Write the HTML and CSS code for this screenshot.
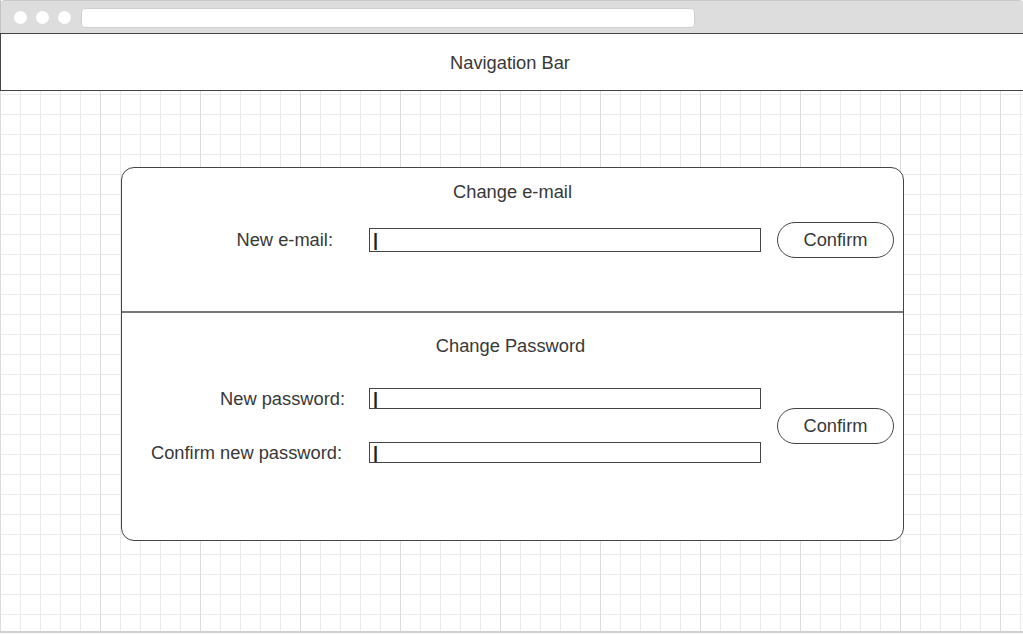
FILE: index.html
```html
<!DOCTYPE html>
<html>
<head>
<meta charset="utf-8">
<link rel="stylesheet" href="styles.css">
</head>
<body>
<div class="window">
  <div class="chrome">
    <div class="dots"><span class="dot"></span><span class="dot"></span><span class="dot"></span></div>
    <div class="url"></div>
  </div>
  <div class="navbar">Navigation Bar</div>
  <div class="canvas">
    <div class="card">
      <div class="section section-email">
        <div class="title">Change e-mail</div>
        <div class="row">
          <div class="label label-email">New e-mail:</div>
          <div class="field field-tall"><span class="caret">|</span></div>
          <button class="btn">Confirm</button>
        </div>
      </div>
      <div class="section section-pass">
        <div class="title title-pass">Change Password</div>
        <div class="pass-form">
          <div class="pass-rows">
            <div class="prow">
              <div class="label label-new">New password:</div>
              <div class="field"><span class="caret">|</span></div>
            </div>
            <div class="prow">
              <div class="label label-confirm">Confirm new password:</div>
              <div class="field"><span class="caret">|</span></div>
            </div>
          </div>
          <button class="btn">Confirm</button>
        </div>
      </div>
    </div>
  </div>
</div>
</body>
</html>
```

FILE: styles.css
```css
* { box-sizing: border-box; }
html, body { margin: 0; padding: 0; background: #ffffff; }
body {
  font-family: "Liberation Sans", Arial, sans-serif;
  color: #383838;
  width: 1023px;
  height: 635px;
  overflow: hidden;
}
.window {
  width: 1023px;
  height: 633px;
  display: flex;
  flex-direction: column;
  border-left: 1px solid #c4c4c4;
  border-bottom: 2px solid #d0d0d0;
}
.chrome {
  height: 33px;
  background: #dddddd;
  border-top: 1px solid #c9c9c9;
  border-top-left-radius: 4px;
  border-top-right-radius: 4px;
  display: flex;
  align-items: center;
  padding-left: 13px;
  flex: none;
}
.dots { display: flex; gap: 9px; }
.dot {
  width: 13px;
  height: 13px;
  border-radius: 50%;
  background: #ffffff;
  display: block;
}
.url {
  margin-left: 10px;
  width: 614px;
  height: 20px;
  background: #ffffff;
  border: 1px solid #cfcfcf;
  border-radius: 4px;
  margin-top: 2px;
}
.navbar {
  height: 58px;
  flex: none;
  border-top: 1px solid #444444;
  border-bottom: 1px solid #444444;
  margin-left: -1px;
  border-left: 1px solid #444444;
  display: flex;
  align-items: center;
  justify-content: center;
  font-size: 18.3px;
  padding-top: 2px;
  padding-right: 4px;
  background: #ffffff;
}
.canvas {
  flex: 1;
  margin-left: -1px;
  background-color: #ffffff;
  background-image:
    linear-gradient(to right, #dcdcdc 1px, transparent 1px),
    linear-gradient(to right, #ebebeb 1px, transparent 1px),
    linear-gradient(to bottom, #ebebeb 1px, transparent 1px);
  background-size: 100px 100%, 20px 100%, 100% 20px;
  background-position: 0 0, 0 0, 0 3px;
  padding-top: 76px;
  padding-left: 121px;
}
.card {
  width: 783px;
  height: 374px;
  border: 1px solid #444444;
  border-radius: 13px;
  background: #ffffff;
  display: flex;
  flex-direction: column;
}
.section-email {
  height: 145px;
  border-bottom: 2px solid #777777;
  padding-top: 13px;
}
.section-pass {
  flex: 1;
  padding-top: 22px;
}
.title {
  font-size: 18.3px;
  line-height: 22px;
  text-align: center;
}
.title-pass { padding-right: 4px; }
.row {
  display: flex;
  align-items: center;
  margin-top: 19px;
}
.label {
  width: 247px;
  text-align: right;
  font-size: 18.3px;
  line-height: 22px;
}
.label-email { padding-right: 36px; }
.label-new { padding-right: 24px; }
.label-confirm { padding-right: 27px; }
.field {
  width: 392px;
  height: 21px;
  border: 1.4px solid #444444;
  background: #ffffff;
  display: flex;
  align-items: center;
  padding-left: 3px;
  overflow: hidden;
}
.field-tall { height: 24px; }
.caret {
  font-size: 18px;
  line-height: 18px;
  font-weight: bold;
  color: #222222;
}
.btn {
  margin-left: 16px;
  width: 117px;
  height: 36px;
  border: 1px solid #444444;
  border-radius: 18px;
  background: #ffffff;
  font-family: "Liberation Sans", Arial, sans-serif;
  font-size: 18.3px;
  color: #383838;
  padding: 0;
}
.pass-form {
  display: flex;
  align-items: center;
  margin-top: 31px;
}
.pass-rows {
  display: flex;
  flex-direction: column;
  gap: 33px;
}
.prow {
  display: flex;
  align-items: center;
  height: 21px;
}
```
